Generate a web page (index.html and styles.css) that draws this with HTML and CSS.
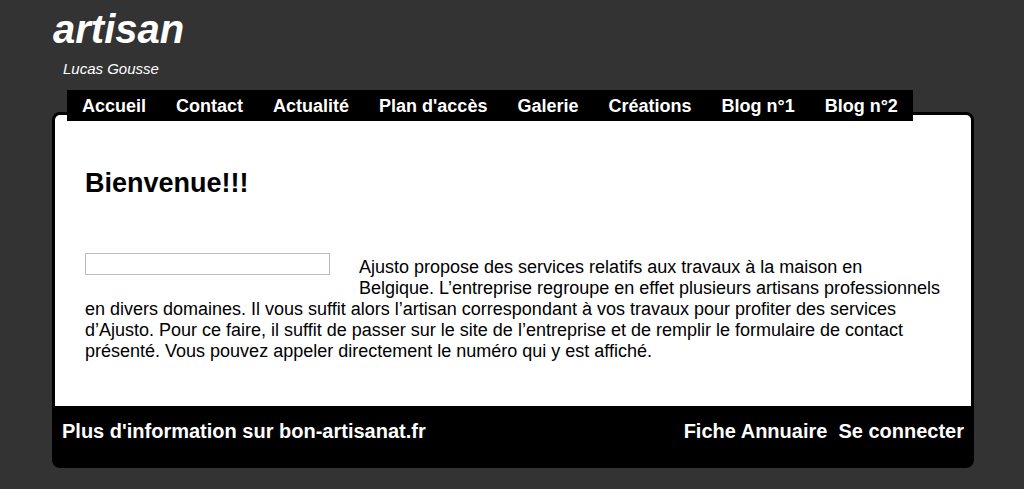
FILE: index.html
```html
<!DOCTYPE html>
<html lang="fr">
<head>
<meta charset="utf-8">
<title>artisan</title>
<link rel="stylesheet" href="styles.css">
</head>
<body>
<header class="site-header">
  <h1 class="site-title">artisan</h1>
  <p class="site-subtitle">Lucas Gousse</p>
</header>
<nav class="main-nav">
  <a href="#">Accueil</a>
  <a href="#">Contact</a>
  <a href="#">Actualité</a>
  <a href="#">Plan d'accès</a>
  <a href="#">Galerie</a>
  <a href="#">Créations</a>
  <a href="#">Blog n°1</a>
  <a href="#">Blog n°2</a>
</nav>
<div class="page">
  <main class="content">
    <h2 class="page-title">Bienvenue!!!</h2>
    <div class="article">
      <div class="media-box"></div>
      <p>Ajusto propose des services relatifs aux travaux à la maison en<br>Belgique. L’entreprise regroupe en effet plusieurs artisans professionnels en divers domaines. Il vous suffit alors l’artisan correspondant à vos travaux pour profiter des services d’Ajusto. Pour ce faire, il suffit de passer sur le site de l’entreprise et de remplir le formulaire de contact présenté. Vous pouvez appeler directement le numéro qui y est affiché.</p>
    </div>
  </main>
  <footer class="site-footer">
    <div class="footer-left">Plus d'information sur <a href="#">bon-artisanat.fr</a></div>
    <div class="footer-right"><a href="#">Fiche Annuaire</a><a href="#">Se connecter</a></div>
  </footer>
</div>
</body>
</html>
```

FILE: styles.css
```css
html, body {
  margin: 0;
  padding: 0;
  background: #333333;
  font-family: "Liberation Sans", Arial, sans-serif;
}

a {
  color: #ffffff;
  text-decoration: none;
}

.site-header {
  padding: 6px 0 0 53px;
  height: 90px;
  box-sizing: border-box;
}

.site-title {
  margin: 0;
  font-size: 40px;
  font-weight: bold;
  font-style: italic;
  color: #ffffff;
  line-height: 46px;
}

.site-subtitle {
  margin: 8px 0 0 10px;
  font-size: 15px;
  font-style: italic;
  color: #ffffff;
  line-height: 17px;
}

.main-nav {
  position: relative;
  z-index: 2;
  display: flex;
  width: max-content;
  margin: 0 0 -9px 67px;
  background: #000000;
  height: 31px;
  box-sizing: border-box;
  padding-top: 2px;
  align-items: center;
}

.main-nav a {
  padding: 0 15px;
  font-size: 18px;
  font-weight: bold;
  line-height: 29px;
}

.page {
  margin: 0 50px 0 52px;
  background: #000000;
  border: 3px solid #000000;
  border-radius: 8px;
}

.content {
  background: #ffffff;
  border-radius: 5px 5px 0 0;
  padding: 53px 30px 44px 30px;
  height: 291px;
  box-sizing: border-box;
}

.page-title {
  margin: 0;
  font-size: 27px;
  font-weight: bold;
  line-height: 30px;
  color: #000000;
}

.article {
  margin-top: 59px;
  font-size: 18px;
  line-height: 21px;
  color: #000000;
}

.media-box {
  float: left;
  width: 243px;
  height: 20px;
  border: 1px solid #bbbbbb;
  margin: -4px 29px 8px 0;
}

.article p {
  margin: 0;
}

.site-footer {
  display: flex;
  justify-content: space-between;
  align-items: center;
  height: 59px;
  padding: 0 7px 9px 7px;
  box-sizing: border-box;
  color: #ffffff;
  font-size: 20px;
  font-weight: bold;
}

.footer-right a {
  margin-left: 11px;
}
```
